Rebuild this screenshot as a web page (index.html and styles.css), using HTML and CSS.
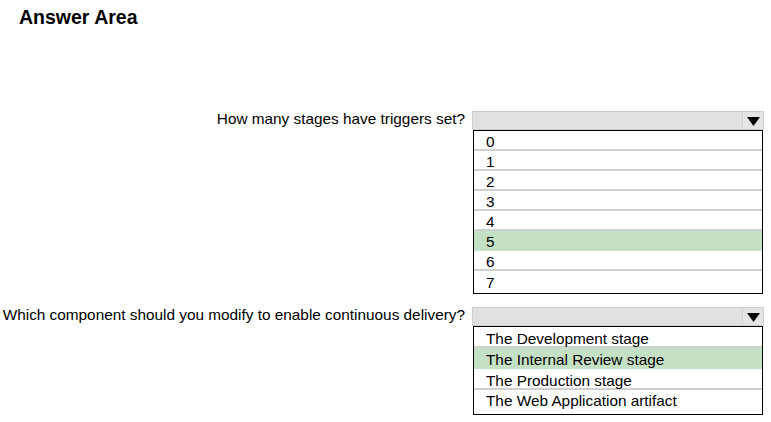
FILE: index.html
```html
<!DOCTYPE html>
<html>
<head>
<meta charset="utf-8">
<link rel="stylesheet" href="styles.css">
</head>
<body>
<div class="page">
  <h1 class="title">Answer Area</h1>
  <div class="question q1">
    <div class="label">How many stages have triggers set?</div>
    <div class="dropdown">
      <div class="bar">
        <span class="btn"><svg width="13" height="9" viewBox="0 0 13 9"><polygon points="0,0 13,0 6.5,9" fill="#000"/></svg></span>
      </div>
      <ul class="list list-num">
        <li>0</li>
        <li>1</li>
        <li>2</li>
        <li>3</li>
        <li>4</li>
        <li class="sel">5</li>
        <li>6</li>
        <li>7</li>
      </ul>
    </div>
  </div>
  <div class="question q2">
    <div class="label">Which component should you modify to enable continuous delivery?</div>
    <div class="dropdown">
      <div class="bar">
        <span class="btn"><svg width="13" height="9" viewBox="0 0 13 9"><polygon points="0,0 13,0 6.5,9" fill="#000"/></svg></span>
      </div>
      <ul class="list list-text">
        <li>The Development stage</li>
        <li class="sel">The Internal Review stage</li>
        <li>The Production stage</li>
        <li>The Web Application artifact</li>
      </ul>
    </div>
  </div>
</div>
</body>
</html>
```

FILE: styles.css
```css
html, body {
  margin: 0;
  padding: 0;
  background: #fff;
}
body {
  font-family: "Liberation Sans", Arial, sans-serif;
  color: #000;
}
.page {
  width: 771px;
  height: 422px;
  padding-top: 6px;
  box-sizing: border-box;
}
.title {
  margin: 0 0 0 19px;
  font-size: 19.5px;
  line-height: 22px;
  font-weight: bold;
}
.question {
  display: grid;
  grid-template-columns: 465px 290px;
  column-gap: 8px;
  align-items: start;
}
.q1 {
  margin-top: 83px;
}
.q2 {
  margin-top: 13px;
}
.label {
  text-align: right;
  font-size: 15.35px;
  line-height: 14px;
  padding-top: 1px;
  white-space: nowrap;
}
.dropdown {
  width: 290px;
}
.bar {
  height: 19px;
  box-sizing: border-box;
  background: #e1e1e1;
  border: 1px solid #cdcdcd;
  display: flex;
  justify-content: flex-end;
  margin-left: -1px;
  margin-right: -1px;
}
.btn {
  width: 21px;
  border-left: 1px solid #d2d2d2;
  display: flex;
  align-items: center;
  justify-content: center;
  background: #e4e4e4;
  padding-top: 1px;
  box-sizing: border-box;
}
.list {
  list-style: none;
  margin: 0;
  padding: 0;
  border: 1px solid #000;
  box-sizing: border-box;
}
.list li {
  box-sizing: border-box;
  padding-left: 12px;
  font-size: 15.35px;
  line-height: 14px;
  display: flex;
  align-items: flex-end;
  border-bottom: 2px solid #d0d0d0;
  height: 20px;
}
.list-text li {
  height: 21px;
}
.list li:last-child {
  border-bottom: none;
  align-items: flex-start;
  padding-top: 5px;
}
.list-num li:last-child {
  height: 22px;
}
.list-text li:last-child {
  height: 24px;
  padding-top: 4px;
}
.list li.sel {
  background: #c5e1c5;
  border-bottom-color: #c5e1c5;
}
```
